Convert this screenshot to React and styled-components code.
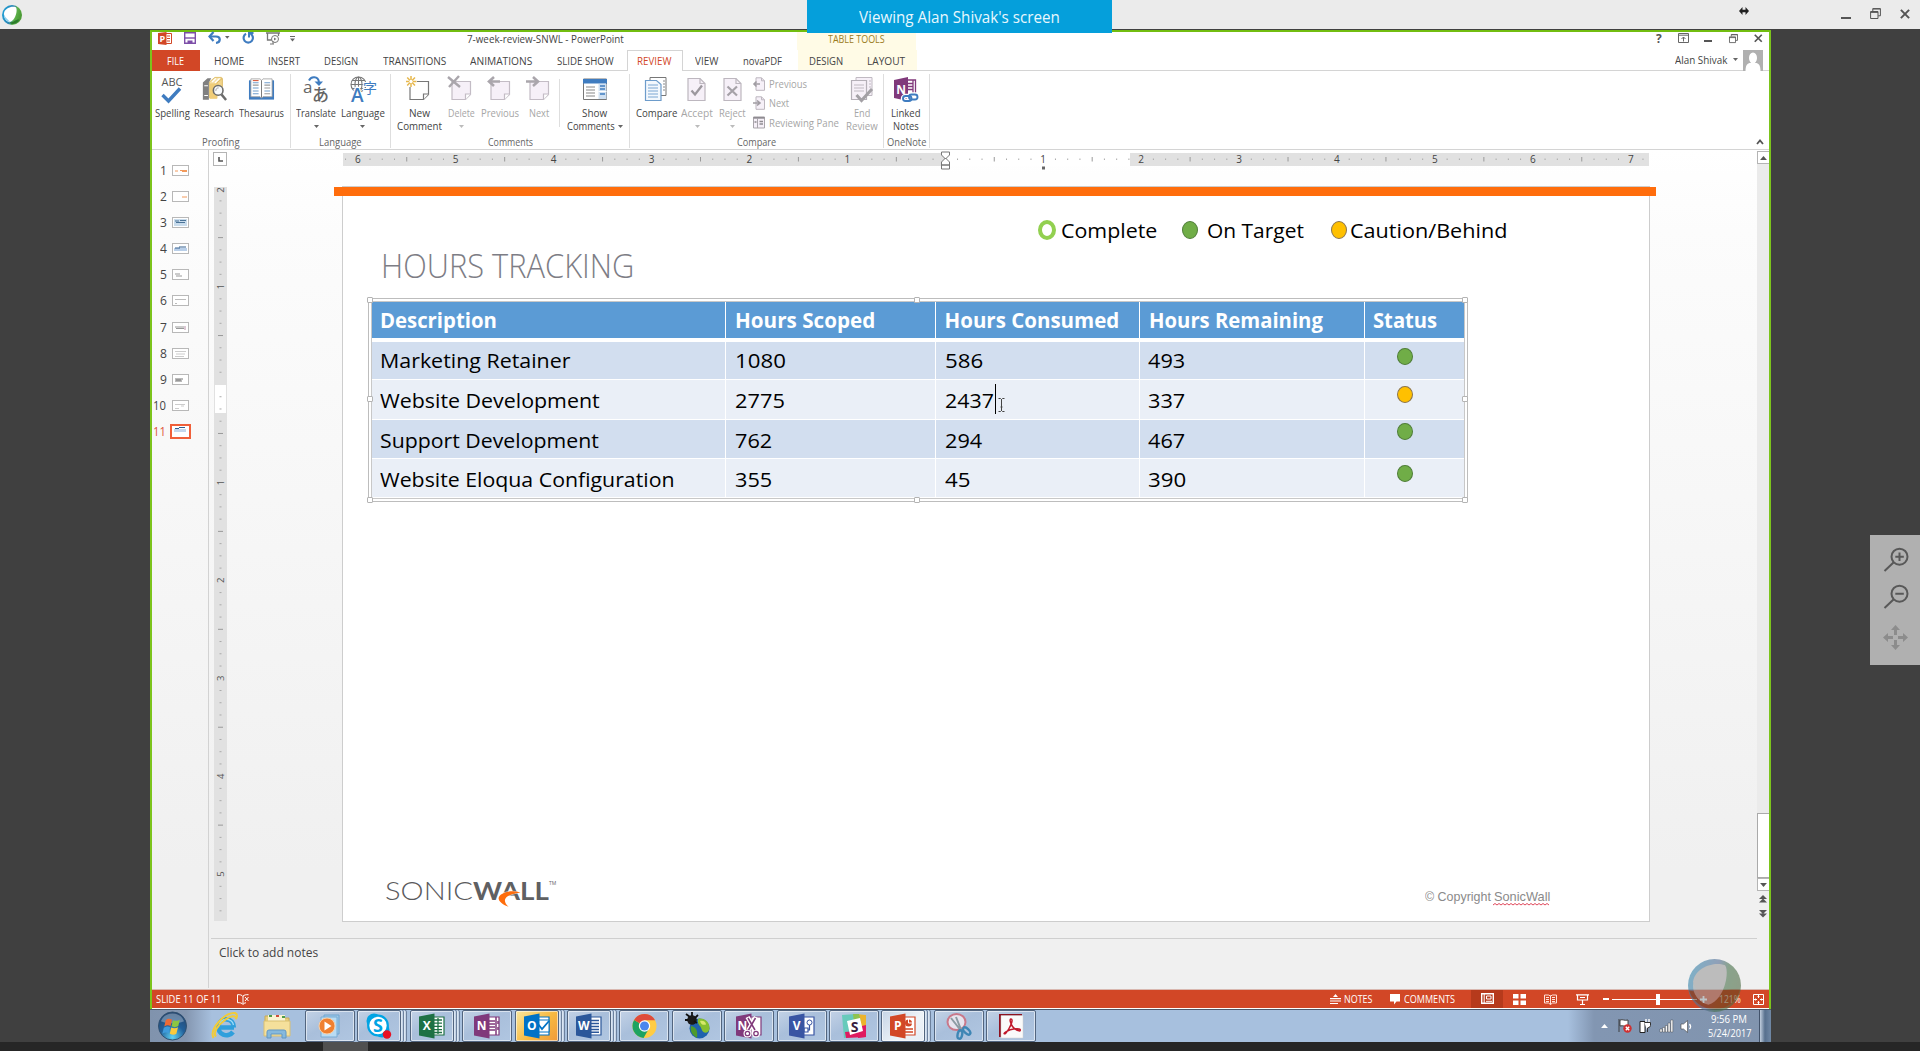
import React, { useLayoutEffect, useRef, useState } from "react";
import styled, { createGlobalStyle, css } from "styled-components";

const Global = createGlobalStyle`
  * { box-sizing: border-box; }
  html, body { margin: 0; background: #404040; overflow: hidden; }
  body { font-family: "Open Sans", "Noto Sans", sans-serif; color: #444; }
  svg { display: block; flex: none; overflow: visible; }
`;

/* ---------- text that is condensed to a known width ---------- */
const FitBox = styled.span`
  display: block;
  flex: none;
  width: ${(p) => p.$w}px;
  height: ${(p) => p.$lh || 14}px;
  line-height: ${(p) => p.$lh || 14}px;
  margin-left: ${(p) => p.$ml || 0}px;
  margin-top: ${(p) => p.$mt || 0}px;
  font-size: ${(p) => p.$size || 11}px;
  font-weight: ${(p) => p.$weight || 400};
  color: ${(p) => p.$color || "#444"};
  font-family: ${(p) => p.$font || "inherit"};
  white-space: nowrap;
`;
const FitInner = styled.span`
  display: inline-block;
  transform-origin: 0 50%;
`;
function Fit({ children, w, lh, ml, mt, size, weight, color, font }) {
  const ref = useRef(null);
  const [k, setK] = useState(1);
  useLayoutEffect(() => {
    if (ref.current) setK(w / ref.current.offsetWidth);
  }, [w, children]);
  return (
    <FitBox $w={w} $lh={lh} $ml={ml} $mt={mt} $size={size} $weight={weight} $color={color} $font={font}>
      <FitInner ref={ref} style={{ transform: `scaleX(${k})` }}>{children}</FitInner>
    </FitBox>
  );
}

/* ---------- viewer shell ---------- */
const Viewer = styled.div`
  position: relative;
  width: 1920px;
  height: 1051px;
  display: flex;
  flex-direction: column;
  background: #404040;
  overflow: hidden;
`;
const ViewerBar = styled.header`
  height: 29px;
  flex: none;
  display: flex;
  align-items: center;
  justify-content: space-between;
  padding: 0 10px 0 2px;
  background: #ebebeb;
`;
const ViewerControls = styled.div`
  display: flex;
  align-items: flex-start;
  height: 29px;
  padding-top: 6px;
`;
const Banner = styled.div`
  position: absolute;
  z-index: 5;
  left: 807px;
  top: 0;
  width: 305px;
  height: 33px;
  display: flex;
  justify-content: center;
  padding-top: 4px;
  background: #059fdb;
`;
const Shared = styled.main`
  width: 1621px;
  height: 1013px;
  margin-left: 150px;
  flex: none;
  display: flex;
  flex-direction: column;
`;
const AppWindow = styled.section`
  height: 979px;
  border: 2px solid #7cc41c;
  border-bottom: 0;
  border-top: 2px solid #72bd10;
  margin-top: 1px;
  background: #fff;
  display: flex;
  flex-direction: column;
`;
const BottomStrip = styled.div`
  height: 9px;
  background: #262626;
  display: flex;
`;
const StripThumb = styled.div`
  margin-left: 323px;
  width: 45px;
  background: #505050;
`;
const ZoomPanel = styled.aside`
  position: absolute;
  left: 1870px;
  top: 535px;
  width: 50px;
  height: 130px;
  background: #b0b0b0;
  display: flex;
  flex-direction: column;
  padding: 12px 0 0 13px;
  gap: 11px;
`;
const Ball = styled.div`
  position: absolute;
  left: 1688px;
  top: 959px;
`;

/* ---------- title bar and tabs ---------- */
const TitleRow = styled.div`
  height: 18px;
  display: flex;
  align-items: flex-start;
  flex: none;
`;
const Cell = styled.div`
  width: ${(p) => p.$w}px;
  margin-left: ${(p) => p.$ml || 0}px;
  margin-top: ${(p) => p.$mt || 0}px;
  display: flex;
  justify-content: ${(p) => p.$j || "center"};
  flex: none;
`;
const TableToolsCap = styled.div`
  width: 119px;
  height: 18px;
  margin-left: 173px;
  background: #fffbe6;
  display: flex;
  justify-content: center;
`;
const Tabs = styled.nav`
  height: 21px;
  flex: none;
  display: flex;
  border-bottom: 1px solid #d4d4d4;
`;
const Tab = styled.div`
  width: ${(p) => p.$w}px;
  height: 20px;
  flex: none;
  display: flex;
  justify-content: center;
  padding-top: 4px;
  ${(p) => p.$kind === "file" && css`background: #d24726; height: 21px;`}
  ${(p) => p.$kind === "on" && css`
    background: #fff; height: 21px; padding-top: 3px;
    border: 1px solid #d4d4d4; border-bottom: 0;`}
  ${(p) => p.$kind === "tool" && css`background: #fffbe6;`}
`;
const Account = styled.div`
  display: flex;
  align-items: flex-start;
  margin-left: 757.5px;
  padding-top: 3px;
`;
const Avatar = styled.div`
  margin: -3px 0 0 5px;
`;

/* ---------- ribbon ---------- */
const Ribbon = styled.div`
  height: 79px;
  flex: none;
  display: flex;
  border-bottom: 1px solid #d4d4d4;
  background: #fff;
`;
const Group = styled.div`
  width: ${(p) => p.$w}px;
  height: 74px;
  margin-top: 3px;
  border-right: 1px solid #dedede;
  display: flex;
  flex-direction: column;
  align-items: center;
  justify-content: space-between;
`;
const GroupButtons = styled.div`
  align-self: stretch;
  display: flex;
  padding-left: ${(p) => p.$pl || 0}px;
`;
const RButton = styled.div`
  width: ${(p) => p.$w}px;
  margin-left: ${(p) => p.$ml || 0}px;
  display: flex;
  flex-direction: column;
  align-items: center;
  flex: none;
`;
const RIcon = styled.div`
  height: 32px;
  padding-top: 2px;
`;
const ButtonLine = styled.div`
  display: flex;
  align-items: center;
  gap: 3px;
  height: 13.5px;
`;
const ShortRule = styled.div`
  width: 1px;
  height: 48px;
  margin: 5px 6px 0 1px;
  background: #dedede;
`;
const SmallList = styled.div`
  margin-left: 4px;
  width: 88px;
  display: flex;
  flex-direction: column;
  gap: 5.5px;
  padding-top: 2.5px;
`;
const SmallItem = styled.div`
  display: flex;
  align-items: center;
  gap: 4px;
  height: 14px;
`;
const Collapse = styled.div`
  margin: 68px 0 0 826px;
`;

/* ---------- editor ---------- */
const Editor = styled.div`
  height: 839px;
  flex: none;
  display: flex;
  background: linear-gradient(#fff 0, #fcfcfc 80px, #f0f0f0 720px, #f0f0f0);
`;
const ThumbPane = styled.div`
  width: 57px;
  height: 838px;
  border-right: 1px solid #d2d2d2;
  padding-top: 7px;
  display: flex;
  flex-direction: column;
  flex: none;
`;
const ThumbRow = styled.div`
  height: 26.17px;
  display: flex;
  align-items: center;
  justify-content: flex-end;
  padding-right: ${(p) => (p.$on ? 17 : 19)}px;
  gap: ${(p) => (p.$on ? 4 : 6)}px;
`;
const Thumb = styled.div`
  width: ${(p) => (p.$on ? 21 : 17)}px;
  height: ${(p) => (p.$on ? 15 : 11)}px;
  border: ${(p) => (p.$on ? "2px solid #f0603a" : "1px solid #b8b8b8")};
  background: #fff;
  overflow: hidden;
`;
const Canvas = styled.div`
  width: 1548px;
  flex: none;
  display: flex;
  flex-direction: column;
`;
const RulerRow = styled.div`
  display: flex;
  height: 36px;
  padding: 2px 0 0 4px;
  flex: none;
`;
const Corner = styled.div`
  width: 14px;
  height: 14px;
  border: 1px solid #b4b4b4;
  background: #fff;
  padding: 4px 0 0 4px;
`;
const HRulerBox = styled.div`
  margin: 1px 0 0 116px;
`;
const StageRow = styled.div`
  display: flex;
  height: 752px;
  flex: none;
  padding-left: 5px;
`;
const VRulerBox = styled.div`
  margin-top: 1px;
`;
const Slide = styled.article`
  position: relative;
  margin-left: 114.5px;
  width: 1308px;
  height: 736px;
  border: 1px solid #cdcdcd;
  background: #fff;
  display: flex;
  flex-direction: column;
  flex: none;
`;
const OrangeBar = styled.div`
  position: absolute;
  left: -9px;
  top: 0;
  width: 1322px;
  height: 9px;
  background: #ff6d0c;
`;
const Legend = styled.div`
  display: flex;
  align-items: center;
  height: 30px;
  margin: 28px 0 0 695px;
`;
const Dot = styled.i`
  display: block;
  flex: none;
  width: 16px;
  height: ${(p) => p.$h || 18}px;
  margin-left: ${(p) => p.$ml || 0}px;
  border-radius: 50%;
  border: 1.5px solid ${(p) => (p.$kind === "caution" ? "#8a7450" : "#507e3a")};
  background: ${(p) => (p.$kind === "caution" ? "#ffc000" : "#70ad47")};
  ${(p) => p.$kind === "ring" && css`
    width: 18px; height: 20px; border: 4px solid #92d050; background: #fff;`}
  ${(p) => p.$dy && css`transform: translateY(${p.$dy}px);`}
`;
const SlideTitle = styled.h1`
  margin: 0 0 0 38px;
  height: 40px;
  font-weight: 300;
`;
const TableWrap = styled.div`
  position: relative;
  margin: 17px 0 0 29px;
  width: 1092px;
`;
const TRow = styled.div`
  display: grid;
  grid-template-columns: 354px 210px 204px 225px 99px;
  height: ${(p) => p.$h}px;
  color: #000;
`;
const TCell = styled.div`
  display: flex;
  align-items: center;
  padding-left: ${(p) => p.$pl}px;
  background: ${(p) => p.$bg};
  border-right: ${(p) => (p.$last ? 0 : 1)}px solid #fff;
  border-bottom: ${(p) => (p.$head ? 4 : 1)}px solid #fff;
`;
const Selection = styled.div`
  position: absolute;
  left: -4px;
  top: -4px;
  right: -4px;
  bottom: -4px;
  border: 1px solid #bdbdbd;
  &::after {
    content: "";
    position: absolute;
    inset: 2px;
    border: 1px solid #c8c8c8;
  }
`;
const Handle = styled.i`
  position: absolute;
  z-index: 2;
  left: ${(p) => p.$x}px;
  top: ${(p) => p.$y}px;
  width: 6px;
  height: 6px;
  border: 1px solid #b4b4b4;
  border-radius: 1px;
  background: #fff;
`;
const Caret = styled.i`
  position: absolute;
  left: 623px;
  top: 82px;
  width: 1px;
  height: 30px;
  background: #000;
`;
const IBeam = styled.div`
  position: absolute;
  left: 626px;
  top: 96px;
`;
const SlideFooter = styled.footer`
  display: flex;
  justify-content: space-between;
  margin: auto 0 12px 42.5px;
  padding-right: 98px;
`;
const Brand = styled.div`
  position: relative;
  display: flex;
  height: 38px;
  align-items: center;
`;
const Swoosh = styled.div`
  position: absolute;
  left: 112px;
  top: 19px;
`;
const TM = styled.span`
  font-size: 5px;
  line-height: 6px;
  color: #666;
  align-self: flex-start;
  margin-top: 9px;
`;
const Copyright = styled.div`
  display: flex;
  padding-top: 18px;
`;
const Notes = styled.div`
  height: 50px;
  border-top: 1px solid #cfcfcf;
  margin-left: 2px;
  padding: 6px 0 0 8px;
  background: #f0f0f0;
`;

/* ---------- scroll bar ---------- */
const ScrollBar = styled.div`
  width: 12px;
  flex: none;
  display: flex;
  flex-direction: column;
  align-items: center;
  padding-top: 1px;
  height: 788px;
`;
const ScrollButton = styled.div`
  width: 12px;
  height: 13px;
  border: 1px solid #b4b4b4;
  border-right: 0;
  background: #fff;
  display: flex;
  align-items: center;
  justify-content: center;
`;
const ScrollTrack = styled.div`
  width: 12px;
  height: 649px;
  background: #ebebeb;
`;
const ScrollThumb = styled.div`
  width: 12px;
  height: 65px;
  border: 1px solid #aaa;
  border-right: 0;
  background: #fff;
`;
const Jump = styled.div`
  margin-top: 4px;
`;

/* ---------- status bar ---------- */
const StatusBar = styled.div`
  height: 19px;
  flex: none;
  display: flex;
  align-items: center;
  background: #d24726;
  border-top: 1px solid #d9b8b0;
`;
const At = styled.div`
  flex: none;
  margin-left: ${(p) => p.$ml || 0}px;
`;
const ViewOn = styled.div`
  width: 32px;
  height: 18px;
  margin-left: 16px;
  padding: 3px 0 0 10px;
  background: #b63a1c;
`;
const Track = styled.div`
  width: 85px;
  height: 11px;
  margin-left: 3px;
  display: flex;
  align-items: center;
  background: linear-gradient(#fff, #fff) 0 5px / 100% 1px no-repeat;
`;
const TrackThumb = styled.div`
  width: 4px;
  height: 11px;
  margin-left: 44px;
  background: #fff;
`;

/* ---------- task bar ---------- */
const TaskBar = styled.div`
  height: 33px;
  flex: none;
  display: flex;
  border-top: 1px solid #4d5868;
  background: linear-gradient(90deg, #8093ad 0, #8496b0 36px, #a7c0de 62px, #a7c0de 1418px, #8296b2 1444px, #8194ae 100%);
`;
const Pinned = styled.div`
  display: flex;
  align-items: center;
  gap: 24px;
  padding: 0 0 0 8px;
  width: 155px;
`;
const TaskItem = styled.div`
  width: 52.4px;
  display: flex;
  flex: none;
`;
const TaskButton = styled.div`
  width: ${(p) => (p.$stack ? 44 : 50)}px;
  height: 32px;
  border: 1px solid #52657f;
  border-radius: 2px;
  box-shadow: inset 0 0 0 1px rgba(255, 255, 255, 0.55);
  background: ${(p) =>
    p.$kind === "hot" ? "linear-gradient(135deg,#f7e7a0,#f8b940 55%,#ef9a3c)"
    : p.$kind === "on" ? "linear-gradient(135deg,#c6d4e6,#eef3f8 60%,#e6edf5)"
    : "linear-gradient(150deg,#c3d2e6,#a9bfdb 45%,#b0c6e1)"};
  display: flex;
  align-items: center;
  justify-content: center;
`;
const Stack = styled.div`
  width: 3px;
  height: 32px;
  border: 1px solid #6d819d;
  border-left-color: #dbe6f2;
  border-radius: 0 2px 2px 0;
  background: #c3d3e7;
`;
const Tray = styled.div`
  display: flex;
  align-items: center;
  margin-left: auto;
  flex: none;
`;
const Clock = styled.div`
  display: flex;
  flex-direction: column;
  align-items: center;
  width: 44px;
  margin-left: 15px;
`;
const ShowDesktop = styled.div`
  width: 12px;
  height: 32px;
  margin-left: 8px;
  border-left: 1px solid #42536b;
  background: linear-gradient(90deg, #c1cede, #57708e 45%, #7088a5);
`;

/* ---------- icons ---------- */
const Tri = ({ c = "#666", up, w = 6 }) => (
  <svg width={w} height={w / 2 + 0.5} viewBox="0 0 6 3.5"><path d={up ? "M0 3.5h6L3 0z" : "M0 0h6L3 3.5z"} fill={c} /></svg>
);
const WebexBall = ({ w, h, faded }) => (
  <svg width={w} height={h} viewBox="0 0 52 52" opacity={faded ? 0.6 : 1}>
    <defs>
      <linearGradient id={faded ? "bf" : "bs"} x1="0" x2="1" y1="0" y2=".3">
        <stop offset="0" stopColor={faded ? "#2f8db3" : "#1aa3dd"} />
        <stop offset=".55" stopColor={faded ? "#516b93" : "#2c86b4"} />
        <stop offset=".75" stopColor={faded ? "#46704a" : "#5eb14b"} />
        <stop offset="1" stopColor={faded ? "#4c6b44" : "#4b9b35"} />
      </linearGradient>
    </defs>
    <circle cx="26" cy="26" r="26" fill={`url(#${faded ? "bf" : "bs"})`} />
    {faded && <path d="M1 31C16 35 40 28 51 30A26 26 0 0 1 1 31z" fill="#6b3a15" opacity=".75" />}
    <path d="M5 22C7 8 26 2 36 6c5 4 1 34-16 39C9 42 5 33 5 22z" fill={faded ? "#9b9b9b" : "#fff"} />
    <path d="M5 24c4 10 10 13 17 20-9 0-18-8-17-20z" fill={faded ? "#8fa0a5" : "#8fd1ef"} />
    {!faded && <path d="M20 46C32 44 38 36 45 38 40 50 26 52 20 46z" fill="#2c7d2c" />}
  </svg>
);
const CloseX = ({ w = 9, s = 1.8 }) => (
  <svg width={w} height={w} viewBox="0 0 9 9"><path d="M.8.8l7.4 7.4M8.2.8L.8 8.2" stroke="#555" strokeWidth={s} /></svg>
);
const Restore = ({ w = 11 }) => (
  <svg width={w} height={w} viewBox="0 0 11 11" fill="none" stroke="#555">
    <path d="M.6 3.5h7.4v7H.6zM.6 4.4h7.4M2.8 3V.6h7.6v7.2H8.2M2.8 1h7.6" />
  </svg>
);
const Note = ({ dim, children }) => (
  <svg width="26" height="26" viewBox="0 0 26 26" fill="none">
    <path d="M4 5.5h18.5v13l-5 5H4z" fill={dim ? "#f6f0f8" : "#fff"} stroke={dim ? "#c3bcc5" : "#777"} strokeWidth="1.2" />
    <path d="M22.5 18h-5v5.5" fill="#fff" stroke={dim ? "#c3bcc5" : "#777"} strokeWidth="1.2" />
    {children}
  </svg>
);
const Page = ({ children }) => (
  <svg width="22" height="26" viewBox="0 0 22 26" fill="none">
    <path d="M2 2.5h12l5 5v17H2z" fill="#f6f0f8" stroke="#bdb7bf" strokeWidth="1.2" />
    <path d="M14 2.5v5h5" stroke="#bdb7bf" strokeWidth="1.2" />
    {children}
  </svg>
);
const icons = {
  spelling: (
    <svg width="26" height="28" viewBox="0 0 26 28">
      <text x="1.5" y="9.5" fontSize="10.5" textLength="21" lengthAdjust="spacingAndGlyphs" fill="#555">ABC</text>
      <path d="M2.500 19l6 6L20 12.500" fill="none" stroke="#3f7cc0" strokeWidth="3.4" />
    </svg>
  ),
  research: (
    <svg width="26" height="26" viewBox="0 0 28 27">
      <path d="M9 6l6-5h7v4l-5 3v15H9z" fill="#f6dfa5" stroke="#e0bd68" />
      <path d="M17 7l6-5v9h-6z" fill="#f3d58b" stroke="#dcb75f" />
      <path d="M12 6l4-4M15 7l5-5" stroke="#fff" strokeWidth="1.300" />
      <path d="M2 6.500l5-4.500h4L8.500 6.500V25H2z" fill="#808080" /><path d="M3.500 10h4M3.500 20.500h4" stroke="#fff" strokeWidth="1.300" />
      <path d="M9.500 7.500h8V24h-8z" fill="#f0cd79" />
      <circle cx="18.500" cy="15" r="5.200" fill="#f8fafc" stroke="#6b6b6b" strokeWidth="1.700" />
      <path d="M22 19.300l5 6" stroke="#6b6b6b" strokeWidth="2.600" />
      <path d="M16 15.500c0-2 1-3.200 3-3.200" fill="none" stroke="#999" />
    </svg>
  ),
  thesaurus: (
    <svg width="27" height="26" viewBox="0 0 28 26">
      <path d="M1 4h26v20H1z" fill="#3f7cc0" />
      <path d="M3 2.500h9.500L14 4l1.500-1.500H25V21H15.500L14 22.500 12.500 21H3z" fill="#fff" stroke="#999" strokeWidth=".8" />
      <path d="M14 4v18" stroke="#777" />
      <path d="M5 6.500h6M5 12h6M5 15h6M5 18h6M17 6.500h6M17 15h6" stroke="#6f9dcc" strokeWidth="1.100" />
      <path d="M5 9h6M17 9h6M17 12h6M17 18h6" stroke="#999" strokeWidth="1.100" />
      <path d="M5 4.300h6" stroke="#d24726" />
    </svg>
  ),
  translate: (
    <svg width="28" height="28" viewBox="0 0 28 28">
      <text x="1" y="17" fontSize="17" fill="#666">a</text>
      <text x="10" y="25" fontSize="17" fill="#666" fontFamily="Noto Sans CJK JP, sans-serif" fontWeight="500">あ</text>
      <path d="M7 4.500C9 0 16 0 17 6" fill="none" stroke="#3f7cc0" strokeWidth="2" />
      <path d="M12.500 5.500h8.500L17 10z" fill="#3f7cc0" />
    </svg>
  ),
  language: (
    <svg width="28" height="28" viewBox="0 0 28 28">
      <g fill="none" stroke="#777" strokeWidth="1.1"><circle cx="9.500" cy="8.500" r="7.500" /><ellipse cx="9.500" cy="8.500" rx="3.500" ry="7.500" /><path d="M2 8.500h15M3 4.500h13M3 12.500h13M9.500 1v15" /></g>
      <text x="2" y="26" fontSize="19" fontWeight="600" fill="#3f7cc0" stroke="#fff" strokeWidth="2.500" paintOrder="stroke">A</text>
      <text x="14" y="17" fontSize="14" fill="#3f7cc0" stroke="#fff" strokeWidth="2" paintOrder="stroke" fontFamily="Noto Sans CJK JP, sans-serif">字</text>
    </svg>
  ),
  newComment: (
    <Note>
      <path d="M-1 0h12v11H-1z" fill="#fff" />
      <path d="M5 0v11M0 5.500h10.500M1.200 1.500l7.800 8M9 1.500l-7.800 8" stroke="#e7b84d" strokeWidth="1.500" />
      <circle cx="5" cy="5.500" r="1.700" fill="#fff" />
    </Note>
  ),
  deleteComment: (<Note dim><path d="M0 1l12 10M11 0L1 11" stroke="#aaa6ac" strokeWidth="2.400" /></Note>),
  prevComment: (<Note dim><path d="M13 5.500H3M7 1L2 5.500 7 10" stroke="#aaa6ac" strokeWidth="2.600" /></Note>),
  nextComment: (<Note dim><path d="M0 5.500h11M7 1l5 4.500L7 10" stroke="#aaa6ac" strokeWidth="2.600" /></Note>),
  showComments: (
    <svg width="26" height="26" viewBox="0 0 26 26">
      <path d="M1.500 3h23v20.500h-23z" fill="#fff" stroke="#777" /><path d="M1 3h24v4.500H1z" fill="#3f7cc0" />
      <path d="M4 11h9M4 14h9M4 17h9M4 20h9" stroke="#888" strokeWidth="1.200" />
      <path d="M16.500 8h8v15h-8z" fill="#cfe0f2" /><path d="M18 10h5M18 13h5M18 18h5" stroke="#3f7cc0" strokeWidth="1.600" /><path d="M16.500 15.500h8" stroke="#fff" />
    </svg>
  ),
  compare: (
    <svg width="24" height="26" viewBox="0 0 24 26" fill="none">
      <path d="M6 1.500h16v18H6z" fill="#fff" stroke="#777" /><path d="M19 5h2M19 8h2M19 11h2M19 14h2" stroke="#888" />
      <path d="M1.500 4.500h11l4.500 4v16H1.500z" fill="#f3f8fd" stroke="#6d9ccb" strokeWidth="1.200" />
      <path d="M4 9h10M4 12h10M4 15h10M4 18h10M4 21h10" stroke="#7aa6d2" />
    </svg>
  ),
  accept: (<Page><path d="M5.500 14.500l3.500 4L16 9.500" stroke="#9c989e" strokeWidth="2.300" /></Page>),
  reject: (<Page><path d="M5.500 10.500l9.500 9M15 10.500l-9.500 9" stroke="#a5a1a7" strokeWidth="2.200" /></Page>),
  endReview: (
    <svg width="24" height="26" viewBox="0 0 24 26" fill="none">
      <path d="M6 1.500h16v18H6z" fill="#f6f0f8" stroke="#c0bac2" /><path d="M19 5h2M19 8h2M19 11h2" stroke="#c0bac2" />
      <path d="M1.500 4.500h15v19h-15z" fill="#f6f0f8" stroke="#b5b0b8" strokeWidth="1.200" />
      <path d="M4 9h10M4 12h10M4 15h10" stroke="#c0bac2" />
      <path d="M6.500 19l5 5.500L22 13" stroke="#a3a0a5" strokeWidth="3" />
    </svg>
  ),
  linked: (
    <svg width="26" height="27" viewBox="0 0 26 27" fill="none">
      <path d="M13 4h9.500v15H13z" fill="#fff" stroke="#81387b" strokeWidth="1.300" /><path d="M14 7.500h6M14 10.500h6M14 13.500h6M20 4v14" stroke="#81387b" strokeWidth="1.300" />
      <path d="M1 4l14-3v24L1 22z" fill="#80397b" /><text x="3.200" y="17.500" fontSize="12" fontWeight="700" fill="#fff">N</text>
      <g stroke="#fff" strokeWidth="4.500"><rect x="10" y="20" width="9" height="5" rx="2.500" /><rect x="16" y="18.500" width="9" height="5" rx="2.500" /></g>
      <g stroke="#3f7cc0" strokeWidth="1.900"><rect x="10" y="20" width="8.500" height="5" rx="2.500" /><rect x="16" y="18.500" width="8.500" height="5" rx="2.500" /></g>
    </svg>
  ),
};
const SmallPage = ({ right }) => (
  <svg width="12" height="14" viewBox="0 0 12 14" fill="none">
    <path d="M3 .8h5.500l3 3v9.500H3z" fill="#f6f0f8" stroke="#bdb7bf" /><path d="M8.500.8v3h3" stroke="#bdb7bf" />
    <path d={right ? "M0 7h6M4 4.500L7 7 4 9.500" : "M7 7H1M3.500 4.500L1 7l2.500 2.500"} stroke="#a19da3" strokeWidth="1.600" />
  </svg>
);
const SmallPane = () => (
  <svg width="12" height="13" viewBox="0 0 12 13" fill="none">
    <path d="M.5 1h11v11H.5z" fill="#f6f0f8" stroke="#a9a5ab" /><path d="M.5 1.800h11" stroke="#8f8b91" strokeWidth="1.800" />
    <path d="M4.500 2v10" stroke="#a9a5ab" /><path d="M6.500 5.500h3.500M6.500 8h3.500M1.500 6h2" stroke="#8f8b91" strokeWidth="1.300" />
  </svg>
);

/* Office application tile: coloured door with a letter over a white sheet */
const Office = ({ c, letter, kind }) => (
  <svg width="26" height="26" viewBox="0 0 26 26" fill="none">
    <path d="M13 4h12v18H13z" fill="#fff" stroke={c} strokeWidth="1.200" />
    {kind === "grid" && <path d="M15 7h8M15 10.200h8M15 13.400h8M15 16.600h8M15 19.500h8M19 5v16" stroke={c} strokeWidth="1.300" />}
    {kind === "lines" && <path d="M15 7.500h8M15 10.500h8M15 13.500h8M15 16.500h8M15 19.300h8" stroke={c} strokeWidth="1.400" />}
    {kind === "book" && <path d="M15 8h6M15 11h6M15 14h6M15 17h6M22 4v18M24 8v3M24 14v3" stroke={c} strokeWidth="1.500" />}
    {kind === "mail" && <><path d="M13 7h12v12H13z" fill="#fff" stroke={c} /><path d="M14 11l4 5 7-8" stroke={c} strokeWidth="1.800" /></>}
    {kind === "visio" && <><circle cx="20.500" cy="9.500" r="2.500" stroke={c} /><path d="M15 15h4v4h-4zM20.500 12v5H19" stroke={c} strokeWidth="1.200" /></>}
    {kind === "chart" && <><circle cx="18.500" cy="10" r="3.500" fill={c} /><path d="M18.500 6v4h4" stroke="#fff" /><path d="M15 16h8M15 19h8" stroke={c} strokeWidth="1.500" /></>}
    <path d="M0 3.500L15.500.5v25L0 22.500z" fill={c} />
    {kind === "clip" && (
      <g>
        <path d="M11.500 4l7.500 13M20 4l-7.500 13" stroke="#fff" strokeWidth="4.500" />
        <circle cx="11.500" cy="20.500" r="4" fill="#fff" /><circle cx="20" cy="20.500" r="4" fill="#fff" />
        <path d="M12 5l7 12M19.500 5l-7 12" stroke={c} strokeWidth="1.500" />
        <circle cx="11.500" cy="20.500" r="2.200" stroke={c} strokeWidth="1.300" /><circle cx="20" cy="20.500" r="2.200" stroke={c} strokeWidth="1.300" />
      </g>
    )}
    <text x={kind === "clip" ? 6.5 : 7.7} y="17.300" textAnchor="middle" fontSize="12" fontWeight="700" fill="#fff">{letter}</text>
  </svg>
);
const task = {
  wmp: (
    <svg width="26" height="26" viewBox="0 0 26 26"><path d="M7 2h15v19H7z" fill="#9cc8e8" stroke="#6ea5cf" /><path d="M4 4h16v20H4z" fill="#b9dcf3" stroke="#78acd4" /><circle cx="10" cy="13" r="8" fill="#f08030" stroke="#f8d0a8" /><path d="M7.500 8.500l7 4.500-7 4.500z" fill="#fff" /></svg>
  ),
  skype: (
    <svg width="26" height="27" viewBox="0 0 26 27"><circle cx="8" cy="8" r="7.500" fill="#00a4e4" /><circle cx="16" cy="17" r="7.500" fill="#00a4e4" /><circle cx="12" cy="12.500" r="9.800" fill="#fff" stroke="#00a4e4" strokeWidth="2.200" /><text x="12" y="19" textAnchor="middle" fontSize="18" fontWeight="700" fill="#00a4e4">S</text><circle cx="21" cy="21.500" r="4.200" fill="#e81123" /></svg>
  ),
  chrome: (
    <svg width="25" height="26" viewBox="0 0 26 26"><circle cx="13" cy="13" r="12.500" fill="#fc4" /><path d="M13 13L2.200 6.700A12.500 12.500 0 0 0 12 25.500L18 15z" fill="#1da362" /><path d="M13 13L2.200 6.700A12.500 12.500 0 0 1 24 7H13z" fill="#de4b3c" /><circle cx="13" cy="13" r="5.900" fill="#fff" /><circle cx="13" cy="13" r="4.700" fill="#4a86ee" /></svg>
  ),
  globe: (
    <svg width="28" height="28" viewBox="0 0 28 28"><circle cx="16.500" cy="16.500" r="10" fill="#1f62ae" /><path d="M15 7c7-2 12 4 11.500 10-2 6-7 4-8 0s-4.500-4-3.500-10z" fill="#86bf30" /><path d="M8 14c5 1 7 4 6 12-5-3-7-7-6-12z" fill="#4e9b2c" /><path d="M17 9c3-1 6 1 6 3.500-3 1-5 0-6-3.500z" fill="#d6e86a" /><circle cx="9" cy="8" r="4.800" fill="#1a1a1a" /><path d="M3 2l4 3M9 0v4M15 3l-3 3M2 8h3M14 11l-3-2" stroke="#111" strokeWidth="1.800" /></svg>
  ),
  slack: (
    <svg width="26" height="26" viewBox="0 0 26 26"><path d="M1 2l14-1-3 23-9 1z" fill="#67cabb" /><path d="M14 1l11 1v12l-8-1z" fill="#ecb32d" /><path d="M17 14l8-2v12l-8 1z" fill="#e01765" /><path d="M4 19l21-2v7L5 25z" fill="#df1a60" /><path d="M12 1h6l2 7-7 1z" fill="#8fc34f" /><path d="M6 8l13-3 3 13-13 4z" fill="#fff" /><text x="13.500" y="18.500" textAnchor="middle" fontSize="14" fontWeight="700" fill="#3a1d3f">S</text></svg>
  ),
  snip: (
    <svg width="26" height="27" viewBox="0 0 26 27" fill="none"><ellipse cx="10.500" cy="9" rx="9" ry="8" fill="#e6e4ee" stroke="#c9788a" strokeWidth="2" /><path d="M5 5l11 14M10 4l6 15" stroke="#8c9ba3" strokeWidth="2" /><ellipse cx="14" cy="21.500" rx="2.300" ry="4.300" stroke="#3e86b5" strokeWidth="2.400" transform="rotate(12 14 21)" /><ellipse cx="20.500" cy="18.500" rx="2.300" ry="4.500" stroke="#3e86b5" strokeWidth="2.400" transform="rotate(-45 20 18)" /></svg>
  ),
  pdf: (
    <svg width="26" height="26" viewBox="0 0 26 26" fill="none"><path d="M1 1h23v23H1z" fill="#8d1220" /><path d="M3 2.500h22V25H3z" fill="#fafafa" stroke="#ccc" strokeWidth=".5" /><path d="M13 6c2.500 0 0 6-2 9.500s-4 6-4.800 5.200 4.500-4 9.500-4.700 7 0 6.500 1.500-6-1.500-7.700-4S11 6 13 6z" stroke="#c0182b" strokeWidth="1.500" /></svg>
  ),
};
const StartOrb = () => (
  <svg width="29" height="30" viewBox="0 0 30 30">
    <defs><radialGradient id="orb" cx=".5" cy=".9" r=".9"><stop offset="0" stopColor="#5fd3f5" /><stop offset=".5" stopColor="#22609a" /><stop offset="1" stopColor="#26476f" /></radialGradient></defs>
    <circle cx="15" cy="15" r="14.500" fill="url(#orb)" stroke="#31506f" />
    <path d="M3 10A13 13 0 0 1 27 10C19 13 11 13 3 10z" fill="#fff" opacity=".3" />
    <path d="M8 9c2.500-2 4.500-1.500 6.500-.5L13 15c-2-1-4-1-6.500.5z" fill="#ee6a35" /><path d="M15.500 9c2 1 4.500 1 7-.5L21 15c-2 1.500-5 1.500-7 .3z" fill="#8cc642" />
    <path d="M6 16.700c2.500-1.500 4.500-1.500 6.500-.5L11 22.500c-2-1-4-1-6.500.5z" fill="#3f9bdc" /><path d="M13.700 16.600c2 1 5 1 7-.3L19 23c-2 1.500-4.500 1-6.800 0z" fill="#fbca3c" />
  </svg>
);
const IE = () => (
  <svg width="28" height="28" viewBox="0 0 28 28" fill="none">
    <path d="M23 15.500H8M22.800 15.500C23 5.500 9 4.500 7.500 13.500S17 26.500 22 20" stroke="#2f9fdc" strokeWidth="4.600" />
    <path d="M22.500 13C21 6 11 5.500 8.500 12" stroke="#9ddcf8" strokeWidth="1.300" />
    <path d="M2.500 26C-2 17 14 0 24 1c3 1 2 4 1 6C25 2.500 19 4 14 8 7 13 1.500 21 5 24.500" stroke="#f2cb38" strokeWidth="2" />
  </svg>
);
const Folder = () => (
  <svg width="28" height="27" viewBox="0 0 28 27">
    <path d="M2 3h10l2 2h12v17H2z" fill="#e8cf7c" stroke="#c9ab58" /><path d="M5 2h17v6H5z" fill="#f9f3d2" /><path d="M6 3h3M19 4h3" stroke="#4f9b47" strokeWidth="2" /><path d="M13 3h3" stroke="#ce4b3b" strokeWidth="2" />
    <path d="M1 8h26v15H1z" fill="#f5e09b" stroke="#d9bf72" /><path d="M4 25v-6q0-2 2-2h15q2 0 2 2v6h-4v-4H8v4z" fill="#86b9dd" stroke="#6397c3" />
  </svg>
);

/* ---------- rulers ---------- */
function HRuler() {
  const out = [];
  for (let i = -49; i <= 57; i++) {
    const x = 602.3 + i * 12.24;
    if (x < 2 || x > 1304) continue;
    if (i % 8 === 0) {
      if (i !== 0) out.push(<text key={i} x={x} y="9.7" textAnchor="middle" fontSize="10" fill="#444">{Math.abs(i / 8)}</text>);
    } else if (i % 4 === 0) out.push(<path key={i} d={`M${x} 4v4.500`} stroke="#999" />);
    else out.push(<path key={i} d={`M${x} 5.500v1.500`} stroke="#aaa" />);
  }
  return (
    <svg width="1307" height="17" viewBox="0 0 1307 17">
      <rect width="1306" height="13" fill="#e1e1e1" /><rect x="602" width="185" height="13" fill="#fff" />
      {out}
      <g fill="#fff" stroke="#777" strokeWidth="1"><path d="M598.500 -1h8v3l-4 4-4-4zM598.500 12v-3l4-4 4 4v3zM598.500 12h8v4h-8z" /></g>
      <path d="M699 13.500h3v3h-3z" fill="#666" />
    </svg>
  );
}
function VRuler() {
  const out = [];
  for (let i = -15; i <= 43; i++) {
    const y = 197.5 + i * 12.24;
    if (i % 8 === 0) {
      if (i !== 0) out.push(<text key={i} x="0" y="0" transform={`translate(9.500 ${y}) rotate(-90)`} textAnchor="middle" fontSize="9.500" fill="#555">{Math.abs(i / 8)}</text>);
    } else if (i % 4 === 0) out.push(<path key={i} d={`M4 ${y}h5`} stroke="#999" />);
    else out.push(<path key={i} d={`M5.500 ${y}h2`} stroke="#aaa" />);
  }
  return (
    <svg width="13" height="734" viewBox="0 0 13 734">
      <rect width="13" height="734" fill="#e1e1e1" /><rect x="1" y="198" width="11" height="28" fill="#fff" />
      {out}
      <text x="0" y="0" transform="translate(9.500 3) rotate(-90)" textAnchor="middle" fontSize="9.500" fill="#555">2</text>
    </svg>
  );
}

/* ---------- data ---------- */
const TABS = [
  ["FILE", 48, 17, "file", "#fff"], ["HOME", 56, 30], ["INSERT", 56, 32], ["DESIGN", 58, 34],
  ["TRANSITIONS", 89, 63], ["ANIMATIONS", 84, 62], ["SLIDE SHOW", 84, 57], ["REVIEW", 56, 34, "on", "#d24726"],
  ["VIEW", 48, 23], ["novaPDF", 67, 39], ["DESIGN", 56, 34, "tool"], ["LAYOUT", 63, 38, "tool"],
];
const TAB_PAD = [-2, 1, 0, 0, 0, 0, 0, -2, -2, -4, 0, 0];
const ROWS = [
  [38, "#d2deef", ["Marketing Retainer", 191], ["1080", 51], ["586", 38], ["493", 37], "ok", -4, -1],
  [40, "#eaeff7", ["Website Development", 220], ["2775", 50], ["2437", 49], ["337", 37], "caution", -5, 0],
  [39, "#d2deef", ["Support Development", 219], ["762", 37], ["294", 37], ["467", 37], "ok", -8, 1],
  [39, "#eaeff7", ["Website Eloqua Configuration", 295], ["355", 37], ["45", 25], ["390", 38], "ok", -5, 2],
];
const HEAD = [["Description", 117, 8], ["Hours Scoped", 140, 9], ["Hours Consumed", 175, 9], ["Hours Remaining", 174, 9], ["Status", 64, 8]];
const PADS = [8, 9, 9, 8];
const THUMBS = [
  <path d="M2 5h3M7 4.500h7M9 5.500h5" stroke="#f29a5c" />, <path d="M9 5h5" stroke="#f29a5c" />,
  <g><path d="M1 1h13v7H1z" fill="#c9dcec" /><path d="M2 3h4M7 2.500h6M3 4.500h9" stroke="#4a7398" /></g>,
  <g><path d="M1 4h13v3H1z" fill="#b9cfe9" /><path d="M2 4h5M6 3h7" stroke="#34608f" /></g>,
  <path d="M2 4h5M3 6h6" stroke="#999" />, <path d="M2 3.500h11M2 7.500h2" stroke="#bbb" />,
  <g><path d="M2 4h9M3 5.500h8" stroke="#999" /><path d="M11 3h2v4h-2z" fill="#dcc8d4" /></g>,
  <path d="M2 2.500h11M3 5h9M2 7.500h9" stroke="#ccc" />, <path d="M2 4h8M2 6h7M3 5h5" stroke="#777" />,
  <path d="M2 3.500h10M2 7.500h4M8 5h3" stroke="#ccc" />, <g><path d="M2 3h12v3H2z" fill="#c4d7ed" /><path d="M3 2.500h4M7 1.500h6" stroke="#2f5f91" /></g>,
];

function Big({ icon, w, ml, lines, dim, caret, inlineCaret }) {
  return (
    <RButton $w={w} $ml={ml}>
      <RIcon>{icons[icon]}</RIcon>
      {lines.map(([t, tw], i) => (
        <ButtonLine key={t}>
          <Fit w={tw} size={11.5} color={dim ? "#a6a6a6" : "#444"}>{t}</Fit>
          {inlineCaret && i === 1 && <Tri w={5} />}
        </ButtonLine>
      ))}
      {caret && <ButtonLine><Tri w={5} c={dim ? "#bbb" : "#666"} /></ButtonLine>}
    </RButton>
  );
}
const GLabel = ({ children, w }) => <Fit w={w} size={11} lh={13} color="#666">{children}</Fit>;
function TaskApp({ children, stack, kind }) {
  return (
    <TaskItem>
      <TaskButton $stack={stack} $kind={kind}>{children}</TaskButton>
      {stack && <><Stack /><Stack /></>}
    </TaskItem>
  );
}

export default function App() {
  return (
    <>
      <Global />
      <Viewer>
        <ViewerBar>
          <WebexBall w={20} h={20} />
          <ViewerControls>
            <svg width="10" height="10" viewBox="0 0 10 10"><path d="M0 5l3.500-4v2.800h3V1L10 5 6.500 9V6.200h-3V9z" fill="#222" /></svg>
            <Cell $w={10} $ml={92} $mt={11}><svg width="10" height="3"><rect width="10" height="2" fill="#555" /></svg></Cell>
            <Cell $w={11} $ml={19} $mt={2}><Restore /></Cell>
            <Cell $w={10} $ml={19} $mt={3}><CloseX w={10} /></Cell>
          </ViewerControls>
        </ViewerBar>
        <Banner><Fit w={201} size={15.5} lh={27} color="#e8f7fd">Viewing Alan Shivak's screen</Fit></Banner>

        <Shared>
          <AppWindow>
            <TitleRow>
              <Cell $w={14} $ml={6}>
                <svg width="14" height="13" viewBox="0 0 14 13"><path d="M7 1.500h6.500v10H7z" fill="#fff" stroke="#d24726" /><path d="M9 4h3M9 6.500h3M9 9h3" stroke="#d24726" /><path d="M0 1l8.500-1v13L0 12z" fill="#d24726" /><text x="1.500" y="10" fontSize="9" fontWeight="700" fill="#fff">P</text></svg>
              </Cell>
              <Cell $w={12} $ml={12}><svg width="12" height="12" viewBox="0 0 12 12" fill="none"><path d="M.7.7h10.600v10.600H.7z" stroke="#7d4fa8" strokeWidth="1.400" /><path d="M0 6h12" stroke="#7d4fa8" strokeWidth="1.400" /><path d="M3.500 8.500h5V12h-5z" fill="#7d4fa8" /></svg></Cell>
              <Cell $w={13} $ml={12}><svg width="13" height="12" viewBox="0 0 13 12" fill="none"><path d="M1 4.500h7c5 0 5 6 0 6.500" stroke="#3f7cc0" strokeWidth="2.200" /><path d="M5.500 0L1.500 4.500 5.500 9" stroke="#3f7cc0" strokeWidth="2.200" /></svg></Cell>
              <Cell $w={5} $ml={4} $mt={4}><Tri w={4.500} /></Cell>
              <Cell $w={12} $ml={12}><svg width="12" height="12" viewBox="0 0 12 12" fill="none"><path d="M4 1.800A4.700 4.700 0 1 0 8.500 1.800" stroke="#3f7cc0" strokeWidth="2.200" /><path d="M7 5.500V1h4.500" stroke="#3f7cc0" strokeWidth="2" /></svg></Cell>
              <Cell $w={14} $ml={12}><svg width="14" height="13" viewBox="0 0 14 13" fill="none" stroke="#777"><path d="M0 1h14M1.500 1v7h5M12.500 1v3" strokeWidth="1.300" /><circle cx="9" cy="7" r="3.500" fill="#fff" /><path d="M8 5.500l2.500 1.500L8 8.500z" fill="#777" stroke="none" /><path d="M4 12h4M7 9v3" /></svg></Cell>
              <Cell $w={5} $ml={10} $mt={4}><svg width="5" height="6" viewBox="0 0 5 6"><path d="M0 .5h5" stroke="#666" /><path d="M0 2.500h5L2.500 5.500z" fill="#666" /></svg></Cell>
              <Cell $w={157} $ml={172}><Fit w={157} size={11}>7-week-review-SNWL - PowerPoint</Fit></Cell>
              <TableToolsCap><Fit w={57} size={10.5} color="#9b7c1c">TABLE TOOLS</Fit></TableToolsCap>
              <Cell $w={6} $ml={740}><Fit w={6} size={12} weight={700} color="#555">?</Fit></Cell>
              <Cell $w={11} $ml={16} $mt={1}><svg width="11" height="10" viewBox="0 0 11 10" fill="none" stroke="#666"><path d="M.5.5h10v9H.5zM.5 2.200h10M5.500 8.500V4M3.500 6l2-2 2 2" /></svg></Cell>
              <Cell $w={8} $ml={15} $mt={8}><svg width="8" height="2"><rect width="8" height="2" fill="#555" /></svg></Cell>
              <Cell $w={9} $ml={17} $mt={2}><Restore w={9} /></Cell>
              <Cell $w={8} $ml={16} $mt={2}><CloseX w={8.500} /></Cell>
            </TitleRow>
            <Tabs>
              {TABS.map(([t, w, tw, kind, color], i) => (
                <Tab key={i} $w={w} $kind={kind}><Fit w={tw} ml={TAB_PAD[i]} size={11.2} color={color}>{t}</Fit></Tab>
              ))}
              <Account>
                <Fit w={52} size={11}>Alan Shivak</Fit>
                <Cell $w={5} $ml={6} $mt={5}><Tri w={5} /></Cell>
                <Avatar><svg width="20" height="21" viewBox="0 0 20 21"><rect width="20" height="21" fill="#b0b0b0" /><ellipse cx="10" cy="8" rx="4" ry="5.500" fill="#fff" /><path d="M2.500 21c0-6 2-8 5-8h5c3 0 5 2 5 8z" fill="#fff" /></svg></Avatar>
              </Account>
            </Tabs>
            <Ribbon>
              <Group $w={139}>
                <GroupButtons>
                  <Big icon="spelling" w={41} lines={[["Spelling", 35]]} />
                  <Big icon="research" w={42} lines={[["Research", 40]]} />
                  <Big icon="thesaurus" w={52} lines={[["Thesaurus", 45]]} />
                </GroupButtons>
                <GLabel w={38}>Proofing</GLabel>
              </Group>
              <Group $w={100}>
                <GroupButtons $pl={2}>
                  <Big icon="translate" w={46} lines={[["Translate", 40]]} caret />
                  <Big icon="language" w={47} lines={[["Language", 44]]} caret />
                </GroupButtons>
                <GLabel w={43}>Language</GLabel>
              </Group>
              <Group $w={239}>
                <GroupButtons $pl={5}>
                  <Big icon="newComment" w={46} lines={[["New", 21], ["Comment", 45]]} />
                  <Big icon="deleteComment" w={38} lines={[["Delete", 27]]} dim caret />
                  <Big icon="prevComment" w={38} ml={1} lines={[["Previous", 38]]} dim />
                  <Big icon="nextComment" w={38} ml={1} lines={[["Next", 20]]} dim />
                  <ShortRule />
                  <Big icon="showComments" w={57} lines={[["Show", 25], ["Comments", 48]]} inlineCaret />
                </GroupButtons>
                <GLabel w={45}>Comments</GLabel>
              </Group>
              <Group $w={254}>
                <GroupButtons $pl={5}>
                  <Big icon="compare" w={42} lines={[["Compare", 41]]} />
                  <Big icon="accept" w={38} ml={1} lines={[["Accept", 32]]} dim caret />
                  <Big icon="reject" w={33} lines={[["Reject", 27]]} dim caret />
                  <SmallList>
                    <SmallItem><SmallPage /><Fit w={38} color="#a6a6a6" size={11}>Previous</Fit></SmallItem>
                    <SmallItem><SmallPage right /><Fit w={20} color="#a6a6a6" size={11}>Next</Fit></SmallItem>
                    <SmallItem><SmallPane /><Fit w={70} color="#a6a6a6" size={11}>Reviewing Pane</Fit></SmallItem>
                  </SmallList>
                  <Big icon="endReview" w={34} ml={4} lines={[["End", 16], ["Review", 32]]} dim />
                </GroupButtons>
                <GLabel w={39}>Compare</GLabel>
              </Group>
              <Group $w={46}>
                <GroupButtons $pl={3}><Big icon="linked" w={38} lines={[["Linked", 30], ["Notes", 26]]} /></GroupButtons>
                <GLabel w={39}>OneNote</GLabel>
              </Group>
              <Collapse><svg width="8" height="6" viewBox="0 0 8 6"><path d="M1 5l3-3.500L7 5" fill="none" stroke="#555" strokeWidth="1.800" /></svg></Collapse>
            </Ribbon>

            <Editor>
              <ThumbPane>
                {THUMBS.map((art, i) => (
                  <ThumbRow key={i} $on={i === 10}>
                    <Fit w={i > 8 ? 13 : 6.500} size={13} lh={16} mt={-1} color={i === 10 ? "#e0533a" : "#444"}>{i + 1}</Fit>
                    <Thumb $on={i === 10}><svg width="15" height="9" viewBox="0 0 15 9">{art}</svg></Thumb>
                  </ThumbRow>
                ))}
              </ThumbPane>
              <Canvas>
                <RulerRow>
                  <Corner><svg width="5" height="5"><path d="M1 0v4h4" fill="none" stroke="#555" strokeWidth="1.600" /></svg></Corner>
                  <HRulerBox><HRuler /></HRulerBox>
                </RulerRow>
                <StageRow>
                  <VRulerBox><VRuler /></VRulerBox>
                  <Slide>
                    <OrangeBar />
                    <Legend>
                      <Dot $kind="ring" /><Fit w={96} ml={5} size={20.5} lh={30} color="#000">Complete</Fit>
                      <Dot $ml={25.5} /><Fit w={97} ml={8.5} size={20.5} lh={30} color="#000">On Target</Fit>
                      <Dot $ml={27.5} $kind="caution" /><Fit w={157} ml={3} size={20.5} lh={30} color="#000">Caution/Behind</Fit>
                    </Legend>
                    <SlideTitle><Fit w={253} size={33.5} lh={40} weight={300} color="#7d7d85">HOURS TRACKING</Fit></SlideTitle>
                    <TableWrap>
                      <TRow $h={40}>
                        {HEAD.map(([t, w, pl], i) => (
                          <TCell key={t} $head $pl={pl} $bg="#5b9bd5" $last={i === 4}><Fit w={w} size={20.500} lh={30} weight={700} color="#fff">{t}</Fit></TCell>
                        ))}
                      </TRow>
                      {ROWS.map(([h, bg, a, b, c, d, kind, dy, ty]) => (
                        <TRow key={a[0]} $h={h}>
                          {[a, b, c, d].map(([t, w], i) => (
                            <TCell key={i} $bg={bg} $pl={PADS[i]}><Fit w={w} mt={ty} size={20.500} lh={30} color="#000">{t}</Fit></TCell>
                          ))}
                          <TCell $bg={bg} $pl={32} $last><Dot $kind={kind} $h={17} $dy={dy} /></TCell>
                        </TRow>
                      ))}
                      <Selection />
                      {[-5, 542, 1090].map((x) => [-5, 94, 195].map((y) => (x === 542 && y === 94 ? null : <Handle key={`${x}_${y}`} $x={x} $y={y} />)))}
                      <Caret />
                      <IBeam><svg width="7" height="14" viewBox="0 0 7 14"><path d="M.5.500h2l1 1 1-1h2M3.500 1v12M.5 13.500h2l1-1 1 1h2M2.500 9h2" fill="none" stroke="#444" /></svg></IBeam>
                    </TableWrap>
                    <SlideFooter>
                      <Brand>
                        <Fit w={88} size={25.500} lh={38} weight={300} color="#5a5a5c" font='"Lato", sans-serif'>SONIC</Fit>
                        <Fit w={76} size={25.500} lh={38} weight={700} color="#5f6062" font='"Lato", sans-serif'>WALL</Fit>
                        <TM>TM</TM>
                        <Swoosh><svg width="24" height="17" viewBox="0 0 24 17"><path d="M23.500 2.500C17 .5 9 1 4 4.500.5 7.500 1 10 4.500 13c2 1.700 4.500 3 7 3.700C9 14.500 7.500 12 8 9.500 9 6 14 4 23.500 2.500z" fill="#ff6d0c" stroke="#fff" strokeWidth=".8" paintOrder="stroke" /></svg></Swoosh>
                      </Brand>
                      <Copyright>
                        <Fit w={66} size={13} lh={15} color="#8a8a8a" font='"Liberation Sans", sans-serif'>© Copyright</Fit>
                        <div>
                          <Fit w={56} ml={3} size={13} lh={15} color="#8a8a8a" font='"Liberation Sans", sans-serif'>SonicWall</Fit>
                          <svg width="60" height="3" viewBox="0 0 60 3"><path d={"M2 1" + Array.from({ length: 28 }, (_, i) => `l2 ${i % 2 ? 1.500 : -1.500}`).join("")} fill="none" stroke="#e0495c" /></svg>
                        </div>
                      </Copyright>
                    </SlideFooter>
                  </Slide>
                </StageRow>
                <Notes><Fit w={99} size={12} lh={16}>Click to add notes</Fit></Notes>
              </Canvas>
              <ScrollBar>
                <ScrollButton><Tri up c="#555" w={7} /></ScrollButton>
                <ScrollTrack />
                <ScrollThumb />
                <ScrollButton><Tri c="#555" w={7} /></ScrollButton>
                <Jump><svg width="8" height="8" viewBox="0 0 8 8"><path d="M0 4l4-4 4 4zM0 7.500l4-4 4 4z" fill="#555" /></svg></Jump>
                <Jump><svg width="8" height="12" viewBox="0 0 8 12"><path d="M0 3h8L4 7zM0 6.500h8l-4 4z" fill="#555" /></svg></Jump>
              </ScrollBar>
            </Editor>

            <StatusBar>
              <Fit w={65} ml={4} size={10.5} color="#fff">SLIDE 11 OF 11</Fit>
              <At $ml={16}><svg width="12" height="11" viewBox="0 0 12 11" fill="none" stroke="#fff"><path d="M6 2.500C5 1 3 .5.5.7v8C3 8.500 5 9 6 10.500 6.500 9.500 7.500 9 9 8.800M6 2v8M6 2C7 1 9 .5 11.500.7M8 3l3.500 4M11.500 3L8 7" /></svg></At>
              <At $ml={1081}><svg width="11" height="10" viewBox="0 0 11 10"><path d="M3 3l2.500-3L8 3zM0 4h11v1.200H0zM0 6.500h11v1H0zM0 9h8v1H0z" fill="#fff" /></svg></At>
              <Fit w={28} ml={3} size={10.5} color="#fff">NOTES</Fit>
              <At $ml={18}><svg width="10" height="11" viewBox="0 0 10 11"><path d="M0 0h10v7.500H6.500L4 10.500v-3H0z" fill="#fff" /></svg></At>
              <Fit w={51} ml={4} size={10.5} color="#fff">COMMENTS</Fit>
              <ViewOn><svg width="13" height="11" viewBox="0 0 13 11" fill="none" stroke="#fff"><path d="M.7.700h11.600v9.600H.7z" strokeWidth="1.400" /><path d="M3.200 1v9" /><path d="M5.500 3h4.500v3H5.500z" /><path d="M5 8.300h6" /></svg></ViewOn>
              <At $ml={10}><svg width="13" height="11"><path d="M0 0h5.500v4.500H0zM7.500 0H13v4.500H7.500zM0 6.500h5.500V11H0zM7.500 6.500H13V11H7.500z" fill="#fff" /></svg></At>
              <At $ml={18}><svg width="13" height="11" viewBox="0 0 13 11" fill="none" stroke="#ffe3da"><path d="M6.500 1.500v9M.5 1h4l2 1 2-1h4v8h-4l-2 1.500-2-1.500h-4zM2 3.500h3M2 5.500h3M2 7.500h3M8 3.500h3M8 5.500h3M8 7.500h3" /></svg></At>
              <At $ml={19}><svg width="13" height="11" viewBox="0 0 13 11" fill="none" stroke="#fff"><path d="M0 .8h13M1.500 1v5h10V1M4 3.500h5M6.500 6v4M4 10.500h5" strokeWidth="1.200" /></svg></At>
              <At $ml={14}><svg width="6" height="2"><rect width="6" height="2" fill="#fff" /></svg></At>
              <Track><TrackThumb /></Track>
              <At $ml={3}><svg width="7" height="7"><path d="M3.500 0v7M0 3.500h7" stroke="#fff" strokeWidth="1.800" /></svg></At>
              <Fit w={22} ml={12} size={10.5} color="#fff">121%</Fit>
              <At $ml={12}><svg width="11" height="11" viewBox="0 0 11 11" fill="none" stroke="#fff"><path d="M.5.500h10v10H.5zM5.500 1v3M5.500 10V7M1 5.500h3M10 5.500H7M4.500 2.500l1-1 1 1M4.500 8.500l1 1 1-1M2.500 4.500l-1 1 1 1M8.500 4.500l1 1-1 1" /></svg></At>
            </StatusBar>
          </AppWindow>

          <TaskBar>
            <Pinned><StartOrb /><IE /><Folder /></Pinned>
            <TaskApp>{task.wmp}</TaskApp>
            <TaskApp stack>{task.skype}</TaskApp>
            <TaskApp stack><Office c="#1e7145" letter="X" kind="grid" /></TaskApp>
            <TaskApp><Office c="#80397b" letter="N" kind="book" /></TaskApp>
            <TaskApp stack kind="hot"><Office c="#0072c6" letter="O" kind="mail" /></TaskApp>
            <TaskApp stack><Office c="#2b579a" letter="W" kind="lines" /></TaskApp>
            <TaskApp>{task.chrome}</TaskApp>
            <TaskApp>{task.globe}</TaskApp>
            <TaskApp><Office c="#80397b" letter="N" kind="clip" /></TaskApp>
            <TaskApp><Office c="#3955a3" letter="V" kind="visio" /></TaskApp>
            <TaskApp>{task.slack}</TaskApp>
            <TaskApp stack kind="on"><Office c="#d24726" letter="P" kind="chart" /></TaskApp>
            <TaskApp>{task.snip}</TaskApp>
            <TaskApp>{task.pdf}</TaskApp>
            <Tray>
              <Tri up c="#fff" w={7} />
              <At $ml={10}><svg width="14" height="14" viewBox="0 0 14 14"><path d="M1 0v13M2 1c3-1 4 1 8 0v6C7 8 5 6 2 7z" fill="#fff" stroke="#333" strokeWidth=".9" /><circle cx="9.500" cy="9.500" r="4.200" fill="#cf3030" /><path d="M7.800 7.800l3.400 3.400M11.200 7.800l-3.400 3.400" stroke="#fff" strokeWidth="1.400" /></svg></At>
              <At $ml={7}><svg width="12" height="14" viewBox="0 0 12 14" fill="none"><path d="M1 2.500h5v11H1z" fill="#fff" stroke="#222" /><path d="M7 0v3M10 0v3" stroke="#fff" strokeWidth="1.400" /><path d="M5.500 3.500h6v3q0 2-3 2.500v4" fill="#fff" stroke="#333" /></svg></At>
              <At $ml={9}><svg width="13" height="12" viewBox="0 0 13 12"><path d="M0 9h2v3H0zM2.700 7.500h2V12h-2zM5.400 5.500h2V12h-2zM8.100 3h2v9h-2zM10.800 0h2v12h-2z" fill="#fff" stroke="#333" strokeWidth=".4" /></svg></At>
              <At $ml={8}><svg width="11" height="13" viewBox="0 0 11 13"><path d="M0 4h2.500L6.500.5v12L2.500 9H0z" fill="#fff" stroke="#444" strokeWidth=".6" /><path d="M8.500 4c1.300 1.500 1.300 3.500 0 5" fill="none" stroke="#fff" strokeWidth="1.300" /></svg></At>
              <Clock>
                <Fit w={36} size={11.500} color="#fff" lh={14}>9:56 PM</Fit>
                <Fit w={43} size={11.500} color="#fff" lh={14}>5/24/2017</Fit>
              </Clock>
              <ShowDesktop />
            </Tray>
          </TaskBar>
        </Shared>
        <BottomStrip><StripThumb /></BottomStrip>

        <ZoomPanel>
          <svg width="26" height="26" viewBox="0 0 26 26" fill="none" stroke="#585858" strokeWidth="2"><circle cx="16.500" cy="9.700" r="8" /><path d="M16.500 5.500v8.500M12.300 9.700h8.500M10.500 15.500L1.500 24" /></svg>
          <svg width="26" height="26" viewBox="0 0 26 26" fill="none" stroke="#585858" strokeWidth="2"><circle cx="16.500" cy="9.700" r="8" /><path d="M12.300 9.700h8.500M10.500 15.500L1.500 24" /></svg>
          <svg width="26" height="30" viewBox="0 0 26 30"><path d="M12.500 4l4.500 5h-3v5h-3V9H8zM12.500 29l4.500-5h-3v-5h-3v5H8zM0 16.500l5-4.500v3h5v3H5v3zM25 16.500L20 12v3h-5v3h5v3z" fill="#8c8c8c" /></svg>
        </ZoomPanel>
        <Ball><WebexBall w={53} h={53} faded /></Ball>
      </Viewer>
    </>
  );
}
